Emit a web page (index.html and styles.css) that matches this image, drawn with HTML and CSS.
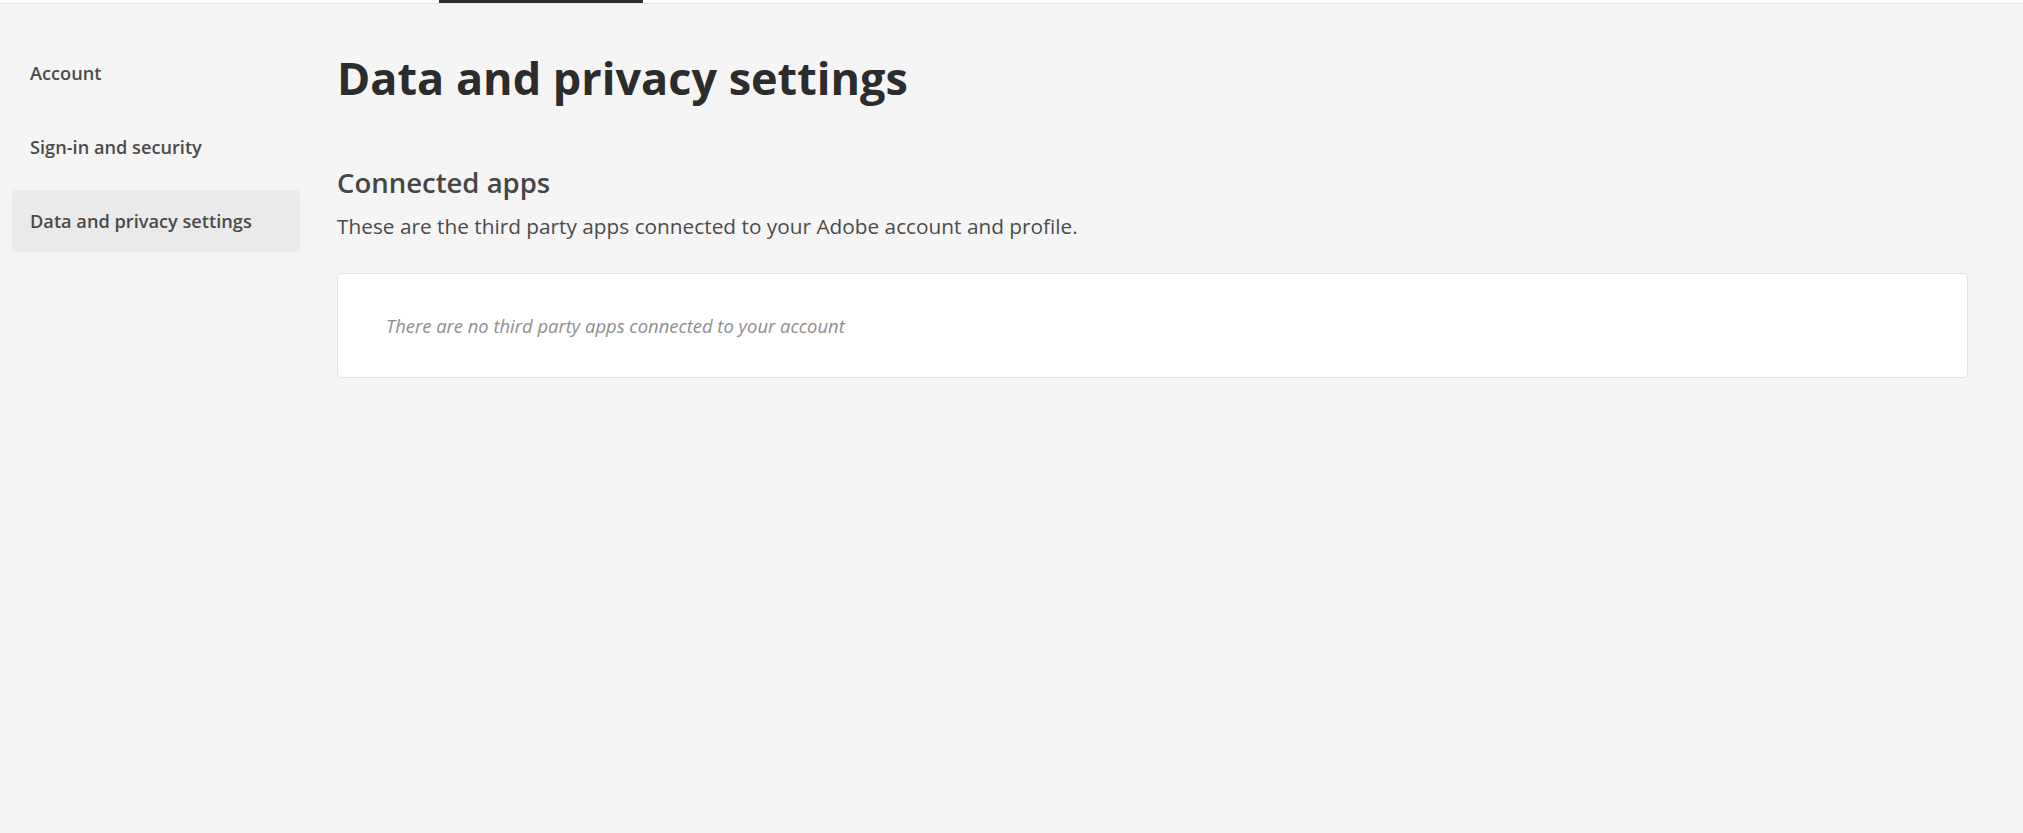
FILE: index.html
```html
<!DOCTYPE html>
<html lang="en">
<head>
<meta charset="utf-8">
<title>Data and privacy settings</title>
<link rel="stylesheet" href="styles.css">
</head>
<body>
<header class="tabbar">
  <span class="tab-spacer"></span>
  <span class="tab-active"></span>
</header>
<div class="layout">
  <nav class="sidenav">
    <a class="nav-item" href="#">Account</a>
    <a class="nav-item" href="#">Sign-in and security</a>
    <a class="nav-item is-selected" href="#">Data and privacy settings</a>
  </nav>
  <main class="content">
    <h1 class="page-title">Data and privacy settings</h1>
    <section class="section">
      <h2 class="section-title">Connected apps</h2>
      <p class="section-desc">These are the third party apps connected to your Adobe account and profile.</p>
      <div class="card">
        <p class="empty-text">There are no third party apps connected to your account</p>
      </div>
    </section>
  </main>
</div>
</body>
</html>
```
FILE: styles.css
```css
html, body {
  margin: 0;
  padding: 0;
}
body {
  background: #f5f5f5;
  font-family: "Open Sans", "Noto Sans", sans-serif;
  color: #2c2c2c;
  min-height: 100vh;
}
.tabbar {
  display: flex;
  height: 3px;
  background: #ffffff;
  border-bottom: 1px solid #e3e3e3;
}
.tab-spacer {
  width: 439px;
}
.tab-active {
  width: 204px;
  height: 3px;
  background: #2c2c2c;
}
.layout {
  display: flex;
  align-items: flex-start;
}
.sidenav {
  display: flex;
  flex-direction: column;
  gap: 12px;
  width: 288px;
  padding: 38px 0 0 12px;
  flex-shrink: 0;
}
.nav-item {
  display: flex;
  align-items: center;
  height: 62px;
  padding-left: 18px;
  border-radius: 5px;
  font-size: 18.2px;
  font-weight: 600;
  line-height: 24px;
  color: #4b4b4b;
  text-decoration: none;
}
.nav-item.is-selected {
  background: #eaeaea;
}
.content {
  flex: 1;
  padding: 46px 55px 0 37px;
}
.page-title {
  margin: 0;
  font-size: 45px;
  line-height: 56px;
  font-weight: 700;
  color: #2c2c2c;
}
.section {
  margin-top: 59px;
}
.section-title {
  margin: 0;
  font-size: 27.5px;
  line-height: 36px;
  font-weight: 600;
  color: #464646;
}
.section-desc {
  margin: 11px 0 0;
  font-size: 20.8px;
  line-height: 28px;
  color: #4b4b4b;
}
.card {
  margin-top: 33px;
  background: #ffffff;
  border: 1px solid #e3e3e3;
  border-radius: 5px;
  padding: 40px 48px 39px;
}
.empty-text {
  margin: 0;
  font-size: 18.4px;
  line-height: 24px;
  font-style: italic;
  color: #8e8e8e;
}
```
